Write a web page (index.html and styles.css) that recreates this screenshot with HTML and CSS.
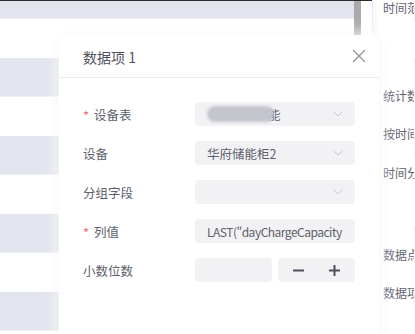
FILE: index.html
```html
<!DOCTYPE html>
<html lang="zh-CN">
<head>
    <meta charset="UTF-8">
    <meta name="viewport" content="width=device-width, initial-scale=1.0">
    <title>数据项 1</title>
    <link rel="stylesheet" href="styles.css">
</head>
<body>
    <div class="page">
        <div class="main">
            <div class="table">
                <div class="row odd"></div>
                <div class="row"></div>
                <div class="row odd"></div>
                <div class="row"></div>
                <div class="row odd"></div>
                <div class="row"></div>
                <div class="row odd"></div>
                <div class="row"></div>
                <div class="row odd"></div>
                <div class="row"></div>
            </div>
            <div class="scrollbar"><div class="thumb"></div></div>
        </div>
        <div class="side">
            <div class="side-labels">
                <div class="side-label l1">时间范围</div>
                <div class="side-label l2">统计数据</div>
                <div class="side-label l3">按时间</div>
                <div class="side-label l4">时间分组</div>
                <div class="side-label l5">数据点</div>
                <div class="side-label l6">数据项</div>
            </div>
            <div class="side-fields">
                <div class="side-field f1"></div>
                <div class="side-field f2"></div>
                <div class="side-field f3"></div>
                <div class="side-field f4"></div>
                <div class="side-field f5"></div>
            </div>
        </div>
    </div>

    <div class="dialog">
        <div class="dialog-header">
            <span class="dialog-title">数据项 1</span>
            <svg class="close" width="14" height="14" viewBox="0 0 14 14">
                <path d="M1 1 L13 13 M13 1 L1 13" stroke="#8f939c" stroke-width="1.3" fill="none"/>
            </svg>
        </div>
        <div class="dialog-body">
            <div class="form-row">
                <label class="form-label"><span class="req">*</span>设备表</label>
                <div class="select">
                    <span class="value"><span class="masked"></span><span class="tail">能</span></span>
                    <svg class="arrow" width="10" height="6" viewBox="0 0 10 6"><path d="M0.5 0.5 L5 5 L9.5 0.5" stroke="#c6c8ce" fill="none"/></svg>
                </div>
            </div>
            <div class="form-row">
                <label class="form-label">设备</label>
                <div class="select">
                    <span class="value">华府储能柜2</span>
                    <svg class="arrow" width="10" height="6" viewBox="0 0 10 6"><path d="M0.5 0.5 L5 5 L9.5 0.5" stroke="#c6c8ce" fill="none"/></svg>
                </div>
            </div>
            <div class="form-row">
                <label class="form-label">分组字段</label>
                <div class="select">
                    <span class="value"></span>
                    <svg class="arrow" width="10" height="6" viewBox="0 0 10 6"><path d="M0.5 0.5 L5 5 L9.5 0.5" stroke="#c6c8ce" fill="none"/></svg>
                </div>
            </div>
            <div class="form-row">
                <label class="form-label"><span class="req">*</span>列值</label>
                <div class="input">LAST("dayChargeCapacity</div>
            </div>
            <div class="form-row">
                <label class="form-label">小数位数</label>
                <div class="number">
                    <div class="number-input"></div>
                    <div class="stepper">
                        <svg width="11" height="11" viewBox="0 0 11 11"><path d="M0 5.5 H11" stroke="#4b5060" stroke-width="2"/></svg>
                        <svg width="11" height="11" viewBox="0 0 11 11"><path d="M0 5.5 H11 M5.5 0 V11" stroke="#4b5060" stroke-width="2"/></svg>
                    </div>
                </div>
            </div>
        </div>
    </div>
</body>
</html>
```

FILE: styles.css
```css
body {
    margin: 0;
    font-family: "Noto Sans CJK SC", "Noto Sans", sans-serif;
    background: #fff;
    overflow: hidden;
}
.page {
    display: flex;
    height: 334px;
}
.main {
    display: flex;
    width: 372px;
    border-top: 1px solid #2b2b2b;
    box-sizing: border-box;
    overflow: hidden;
}
.table {
    width: 354px;
    margin-top: -21px;
}
.row {
    height: 39px;
    background: #fff;
}
.row.odd {
    background: #e2e5ed;
    border-bottom: 1px solid #eef0f4;
    box-sizing: border-box;
}
.scrollbar {
    width: 18px;
}
.thumb {
    width: 7px;
    height: 34px;
    background: #a9a9ab;
}
.side {
    flex: 1;
    display: flex;
    border-left: 1px solid #ececf0;
    box-shadow: inset 6px 0 8px -6px rgba(0, 0, 0, 0.06);
    padding-left: 10px;
    overflow: hidden;
}
.side-labels {
    width: 31px;
    overflow: hidden;
}
.side-label {
    white-space: nowrap;
    font-size: 12px;
    color: #5f6470;
    line-height: 18px;
}
.l1 { margin-top: -1px; }
.l2 { margin-top: 70px; }
.l3 { margin-top: 20px; }
.l4 { margin-top: 21px; }
.l5 { margin-top: 64px; }
.l6 { margin-top: 20px; }
.side-fields {
    flex: 1;
}
.side-field {
    background: #f1f2f5;
}
.f1 { height: 22px; }
.f2 { height: 38px; margin-top: 36px; }
.f3 { height: 22px; margin-top: 41px; }
.f4 { height: 33px; margin-top: 67px; }
.f5 { height: 42px; margin-top: 35px; }

.dialog {
    position: absolute;
    left: 59px;
    top: 35px;
    width: 320px;
    height: 330px;
    background: #fff;
    border-radius: 8px;
    box-shadow: 0 0 14px 3px rgba(255, 255, 255, 0.85), 0 2px 12px rgba(0, 0, 0, 0.07);
}
.dialog-header {
    height: 42px;
    display: flex;
    align-items: center;
    justify-content: space-between;
    padding: 0 13px 0 24px;
    border-bottom: 1px solid #ebecef;
}
.dialog-title {
    font-size: 14px;
    color: #4f535c;
    margin-top: 1px;
}
.dialog-body {
    padding: 24px 24px 0 24px;
    display: flex;
    flex-direction: column;
    gap: 15px;
}
.form-row {
    display: flex;
    align-items: center;
    height: 24px;
}
.form-label {
    width: 112px;
    font-size: 12.5px;
    color: #5c606b;
    display: flex;
    align-items: center;
}
.req {
    color: #f56c6c;
    width: 11px;
    font-size: 13px;
    margin-top: 3px;
}
.select, .input {
    width: 160px;
    height: 24px;
    box-sizing: border-box;
    background: #f2f2f4;
    border-radius: 4px;
    display: flex;
    align-items: center;
    justify-content: space-between;
    padding: 0 12px;
    font-size: 12.5px;
    color: #5c606b;
    white-space: nowrap;
    overflow: hidden;
}
.input {
    padding-right: 4px;
    letter-spacing: -0.5px;
    font-size: 12px;
}
.value {
    display: flex;
    align-items: center;
}
.masked {
    position: relative;
    width: 67px;
    height: 16px;
    border-radius: 8px;
    background: #c4c5cc;
    filter: blur(1.5px);
}
.tail {
    margin-left: -6px;
}
.number {
    display: flex;
    gap: 6px;
}
.number-input, .stepper {
    width: 77px;
    height: 24px;
    background: #f2f2f4;
    border-radius: 4px;
}
.stepper {
    display: flex;
    align-items: center;
    justify-content: space-between;
    padding: 0 15px;
    box-sizing: border-box;
}
```
